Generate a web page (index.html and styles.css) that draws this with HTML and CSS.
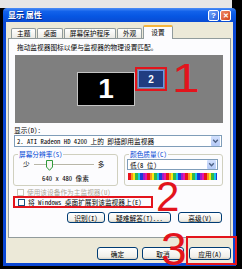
FILE: index.html
```html
<!DOCTYPE html>
<html lang="zh-CN">
<head>
<meta charset="utf-8">
<title>显示 属性</title>
<link rel="stylesheet" href="styles.css">
</head>
<body>
<div class="screen">
  <div class="window">
    <div class="titlebar">
      <span class="title">显示 属性</span>
      <span class="tb-btn help">?</span>
      <span class="tb-btn close">✕</span>
    </div>
    <div class="frame">
      <div class="tabs">
        <span class="tab">主题</span>
        <span class="tab">桌面</span>
        <span class="tab">屏幕保护程序</span>
        <span class="tab">外观</span>
        <span class="tab active">设置</span>
      </div>
      <div class="panel">
        <p class="desc">拖动监视器图标以便与监视器的物理设置匹配。</p>
        <div class="monitors">
          <div class="mon mon1">1</div>
          <div class="mon mon2">2</div>
          <span class="hl hl-mon2"></span>
        </div>
        <div class="label">显示(D):</div>
        <div class="select wide">
          <span class="sel-text">2. ATI Radeon HD 4200 上的 即插即用监视器</span>
          <span class="arrow"><svg width="9" height="10" viewBox="0 0 9 10"><path d="M2.2 3.8 L4.5 6.2 L6.8 3.8" fill="none" stroke="#4d6185" stroke-width="1.4"/></svg></span>
        </div>
        <div class="groups">
          <fieldset class="group res">
            <legend>屏幕分辨率(S)</legend>
            <div class="slider-row">
              <span>少</span>
              <span class="track"><svg class="thumb" width="7" height="11" viewBox="0 0 7 11"><path d="M0.5 0.5 H6.5 V7 L3.5 10.3 L0.5 7 Z" fill="#f7f7f4" stroke="#2f9a3a" stroke-width="1"/></svg></span>
              <span>多</span>
            </div>
            <div class="res-text">640 x 480 像素</div>
          </fieldset>
          <fieldset class="group color">
            <legend>颜色质量(C)</legend>
            <div class="select small">
              <span class="sel-text">低(8 位)</span>
              <span class="arrow"><svg width="9" height="9" viewBox="0 0 9 9"><path d="M2.2 3.3 L4.5 5.7 L6.8 3.3" fill="none" stroke="#4d6185" stroke-width="1.4"/></svg></span>
            </div>
            <div class="colorbar"></div>
          </fieldset>
        </div>
        <div class="check disabled"><span class="box"></span><span>使用该设备作为主监视器(U)</span></div>
        <div class="check extend"><span class="box"></span><span>将 Windows 桌面扩展到该监视器上(E)</span></div>
        <div class="panel-buttons">
          <span class="btn b-id">识别(I)</span>
          <span class="btn b-tr">疑难解答(T)...</span>
          <span class="btn b-adv">高级(V)</span>
        </div>
      </div>
      <div class="dialog-buttons">
        <span class="btn b-ok">确定</span>
        <span class="btn b-cancel">取消</span>
        <span class="btn b-apply">应用(A)</span>
      </div>
    </div>
  </div>
  <span class="mark m1">1</span>
  <span class="mark m2">2</span>
  <span class="mark m3">3</span>
  <span class="hl hl-apply"></span>
</div>
</body>
</html>
```
FILE: styles.css
```css
* { box-sizing: border-box; }
html, body { margin: 0; padding: 0; }
body {
  width: 242px;
  height: 269px;
  overflow: hidden;
  background: #000;
  font-family: "Noto Sans Mono CJK SC", "Liberation Mono", "Noto Sans CJK SC", monospace;
  font-size: 6.7px;
  color: #000;
}
.screen {
  position: relative;
  width: 242px;
  height: 269px;
  padding-top: 8px;
  background: linear-gradient(#e6e6e6 0, #e6e6e6 8px, #000 8px) 0 0 / 232px 100% no-repeat, #000;
}
.window { margin-left: 3px; width: 233px; }
.titlebar {
  height: 14px;
  display: flex;
  align-items: center;
  padding: 0 5px 0 5px;
  border-radius: 4px 4px 0 0;
  background: linear-gradient(180deg, #4a8cf5 0%, #1262ea 25%, #0656e2 60%, #0a4bd2 100%);
}
.title {
  flex: 1;
  color: #fff;
  font-weight: 700;
  font-size: 8px;
  line-height: 10px;
  font-family: "Noto Sans CJK SC", sans-serif;
  text-shadow: 1px 1px 0 #0a2a8a;
}
.tb-btn {
  width: 11px;
  height: 11px;
  border: 1px solid #fff;
  border-radius: 2px;
  color: #fff;
  font: 700 8px/9px "Liberation Sans", sans-serif;
  display: flex;
  align-items: center;
  justify-content: center;
}
.help { background: linear-gradient(135deg, #6fa0f8, #2c63dc); }
.close { background: linear-gradient(135deg, #f08a64, #d2441c); margin-left: 1px; font-size: 7px; }
.frame {
  height: 244px;
  background: #ece9d8;
  border: 3px solid #0a47d4;
  border-top: 0;
  padding: 3px 0 0 2px;
}
.tabs {
  display: flex;
  align-items: flex-end;
  height: 13px;
  padding-left: 3px;
}
.tab {
  height: 10px;
  padding: 0 5px;
  line-height: 9px;
  border: 1px solid #919b9c;
  border-bottom: 0;
  border-radius: 2px 2px 0 0;
  background: linear-gradient(#ffffff, #ecebe5);
  margin-right: 1px;
}
.tab.active {
  height: 14px;
  margin-bottom: -1px;
  background: #fcfcfe;
  border-top: 2px solid #f5b53c;
  position: relative;
  z-index: 1;
  padding: 1px 7px 0;
}
.panel {
  width: 223px;
  height: 200px;
  border: 1px solid #919b9c;
  background: #fcfcfe;
  padding-top: 4px;
}
.desc { margin: 0 0 0 8px; line-height: 8px; height: 8px; white-space: nowrap; }
.monitors {
  position: relative;
  margin: 4px 0 0 6px;
  width: 208px;
  height: 68px;
  background: #7f7f7f;
}
.mon {
  position: absolute;
  display: flex;
  align-items: center;
  justify-content: center;
  color: #fff;
  font-family: "Liberation Sans", sans-serif;
  font-weight: 700;
}
.mon1 { left: 62px; top: 17px; width: 58px; height: 34px; background: #000; border: 1px solid #c4c4c4; font-size: 28px; }
.mon2 { left: 123px; top: 15px; width: 26px; height: 18px; background: #203c80; border: 1px solid #6d95e6; font-size: 10px; }
.hl { position: absolute; border: 2px solid #e3141c; }
.hl-mon2 { left: 120px; top: 12px; width: 32px; height: 24px; }
.label { margin: 3px 0 0 5px; line-height: 8px; height: 8px; }
.select {
  display: flex;
  align-items: center;
  height: 12px;
  border: 1px solid #7f9db9;
  background: #fff;
  padding: 0 1px 0 2px;
}
.sel-text { white-space: nowrap; line-height: 8px; }
.select.wide { margin: 1px 0 0 5px; width: 208px; }
.arrow {
  margin-left: auto;
  width: 9px;
  height: 10px;
  display: flex;
  border-radius: 1px;
  background: linear-gradient(#d2e0fd, #b4c9f6);
}
.select.small .arrow { height: 9px; }
.groups { display: flex; gap: 6px; margin: 3px 0 0 4px; }
.group {
  margin: 0;
  padding: 0;
  min-width: 0;
  height: 36px;
  border: 1px solid #d0d0bf;
  border-radius: 3px;
}
.group legend { margin-left: 4px; padding: 0 1px; color: #0046d5; line-height: 8px; font-size: 6.7px; }
.res { width: 105px; }
.color { width: 99px; }
.slider-row { display: flex; align-items: flex-start; height: 11px; padding-left: 9px; margin-top: 2px; line-height: 8px; }
.track {
  display: flex;
  width: 60px;
  height: 11px;
  margin: 0 4px 0 4px;
  padding-left: 12px;
  background: linear-gradient(transparent 4px, #b8b6a8 4px, #b8b6a8 5px, #fff 5px, #fff 6px, transparent 6px);
}
.res-text { text-align: center; margin-top: 3px; line-height: 8px; }
.select.small { margin: 1px 0 0 2px; width: 91px; height: 11px; }
.colorbar {
  margin: 3px 0 0 3px;
  width: 89px;
  height: 7px;
  background: repeating-linear-gradient(90deg,
    #e8141c 0 3px, #f7941d 3px 5px, #f7ec14 5px 7px, #34b84a 7px 10px,
    #14c8e8 10px 12px, #1c3cd8 12px 15px, #a01cc8 15px 17px, #e814a8 17px 19px);
}
.check { display: flex; align-items: center; gap: 3px; line-height: 8px; white-space: nowrap; }
.box { width: 7px; height: 7px; border: 1px solid #1c5180; background: #fff; flex: none; }
.check.disabled { margin: 2px 0 0 8px; height: 8px; color: #aca899; }
.check.disabled .box { border-color: #c9c7ba; }
.check.extend {
  margin: 0 0 0 4px;
  width: 140px;
  height: 12px;
  border: 2px solid #e3141c;
  padding-left: 3px;
}
.panel-buttons { display: flex; margin: 4px 0 0 58px; }
.btn {
  height: 11px;
  display: flex;
  align-items: center;
  justify-content: center;
  border: 1px solid #003c74;
  border-radius: 3px;
  background: linear-gradient(#ffffff, #f0efe9 80%, #d8d3c6);
  line-height: 8px;
  white-space: nowrap;
}
.b-id { width: 38px; }
.b-tr { width: 63px; margin-left: 3px; }
.b-adv { width: 44px; margin-left: 7px; }
.dialog-buttons { display: flex; justify-content: flex-end; margin-top: 9px; padding-right: 2px; }
.dialog-buttons .btn { height: 13px; }
.b-ok { width: 41px; }
.b-cancel { width: 42px; margin-left: 4px; }
.b-apply { width: 42px; margin-left: 5px; }
.mark {
  position: absolute;
  font-family: "Liberation Sans", sans-serif;
  color: #e3141c;
  line-height: 1;
}
.m1 { left: 172px; top: 58px; font-size: 40px; transform: scaleX(1.25); transform-origin: 0 0; }
.m2 { left: 156px; top: 176px; font-size: 42px; }
.m3 { left: 161px; top: 226px; font-size: 46px; }
.hl-apply { left: 186px; top: 236px; width: 51px; height: 29px; }
```
